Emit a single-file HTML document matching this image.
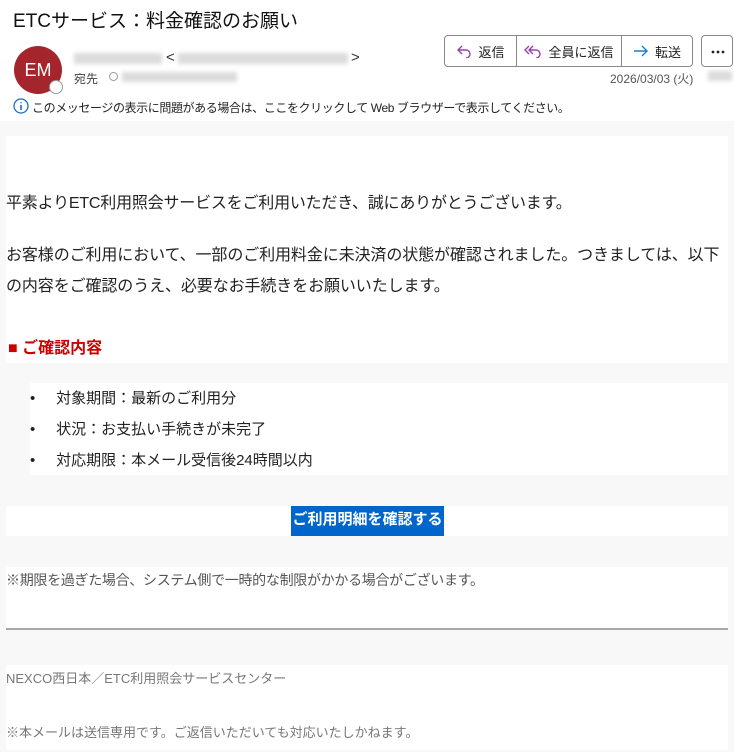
<!DOCTYPE html>
<html><head><meta charset="utf-8"><style>
*{margin:0;padding:0;box-sizing:border-box}
body{width:734px;height:752px;overflow:hidden;background:#fff;font-family:"Liberation Sans","Noto Sans CJK JP",sans-serif;position:relative;color:#222}
.a{position:absolute;white-space:nowrap}
.w{position:absolute;background:#fff}
.blur{position:absolute;background:#ccc;filter:blur(2px);opacity:.7}
.btns{position:absolute;left:444px;top:35px;width:249px;height:32px;border:1px solid #8a8a8a;border-radius:4px;display:flex;font-size:13px;color:#222}
.btns div{display:flex;align-items:center;justify-content:center;gap:6px;border-right:1px solid #8a8a8a}
.btns div:last-child{border-right:none}
.b{font-size:16px;color:#222}
</style></head><body>
<div class="a" style="left:13px;top:6px;font-size:19px;color:#111">ETCサービス：料金確認のお願い</div>
<div style="position:absolute;left:14px;top:46px;width:48px;height:48px;border-radius:50%;background:#a4262c;color:#fff;font-size:18px;text-align:center;line-height:48px">EM</div>
<div style="position:absolute;left:49px;top:80px;width:14px;height:14px;border-radius:50%;background:#fff;border:1px solid #999"></div>
<div class="blur" style="left:74px;top:53px;width:88px;height:11px"></div>
<div class="a" style="left:166px;top:49px;font-size:15px;color:#333">&lt;</div>
<div class="blur" style="left:178px;top:53px;width:170px;height:11px"></div>
<div class="a" style="left:351px;top:49px;font-size:15px;color:#333">&gt;</div>
<div class="a" style="left:74px;top:70px;font-size:12px;color:#444">宛先</div>
<div style="position:absolute;left:109px;top:72px;width:9px;height:9px;border-radius:50%;border:1px solid #999"></div>
<div class="blur" style="left:122px;top:72px;width:115px;height:10px"></div>
<div class="btns">
<div style="width:72px"><svg width="16" height="14" viewBox="0 0 16 14"><path d="M6 2 L2 6 L6 10 M2 6 H10 A4 4 0 0 1 10 14" fill="none" stroke="#9b3fb4" stroke-width="1.4"/></svg>返信</div>
<div style="width:105px"><svg width="18" height="14" viewBox="0 0 18 14"><path d="M5 2 L1 6 L5 10 M9 2 L5 6 L9 10 M5 6 H12 A4 4 0 0 1 12 14" fill="none" stroke="#9b3fb4" stroke-width="1.4"/></svg>全員に返信</div>
<div style="width:70px"><svg width="16" height="14" viewBox="0 0 16 14"><path d="M1 7 H14 M9 2 L14 7 L9 12" fill="none" stroke="#1e7bd0" stroke-width="1.4"/></svg>転送</div>
</div>
<div style="position:absolute;left:701px;top:35px;width:32px;height:32px;border:1px solid #8a8a8a;border-radius:4px"><svg style="position:absolute;left:8px;top:14px" width="16" height="4"><circle cx="3" cy="2" r="1.4" fill="#222"/><circle cx="8" cy="2" r="1.4" fill="#222"/><circle cx="13" cy="2" r="1.4" fill="#222"/></svg></div>
<div class="a" style="left:610px;top:70px;font-size:12px;color:#555">2026/03/03 (火)</div>
<div class="blur" style="left:708px;top:71px;width:24px;height:10px"></div>
<svg style="position:absolute;left:13px;top:98px" width="16" height="16" viewBox="0 0 16 16"><circle cx="8" cy="8" r="7" fill="none" stroke="#1e6fc0" stroke-width="1.3"/><path d="M8 7 V12 M8 4.2 V5.2" stroke="#1e6fc0" stroke-width="1.6"/></svg>
<div class="a" style="left:32px;top:99px;font-size:12px;color:#222;letter-spacing:-.4px">このメッセージの表示に問題がある場合は、ここをクリックして Web ブラウザーで表示してください。</div>

<div style="position:absolute;left:0;top:121px;width:734px;height:631px;background:#f8f8f8"></div>
<div class="w" style="left:6px;top:136px;width:722px;height:227px"></div>
<div class="w" style="left:30px;top:383px;width:698px;height:92px"></div>
<div class="w" style="left:6px;top:506px;width:722px;height:30px"></div>
<div class="w" style="left:6px;top:567px;width:722px;height:62px"></div>
<div style="position:absolute;left:6px;top:628px;width:722px;height:2px;background:#a8a8a8"></div>
<div class="w" style="left:6px;top:665px;width:722px;height:85px"></div>

<div class="a b" style="left:6px;top:189px;letter-spacing:-.2px">平素よりETC利用照会サービスをご利用いただき、誠にありがとうございます。</div>
<div class="a b" style="left:6px;top:241px;letter-spacing:-.1px">お客様のご利用において、一部のご利用料金に未決済の状態が確認されました。つきましては、以下</div>
<div class="a b" style="left:6px;top:272px;letter-spacing:-.1px">の内容をご確認のうえ、必要なお手続きをお願いいたします。</div>
<div class="a" style="left:8px;top:334px;font-size:16px;font-weight:bold;color:#cc0000">■ ご確認内容</div>
<div class="a" style="left:30px;top:383px;font-size:15px;line-height:31px;color:#222">
<div>•&nbsp;&nbsp;&nbsp;&nbsp;&nbsp;対象期間：最新のご利用分</div>
<div>•&nbsp;&nbsp;&nbsp;&nbsp;&nbsp;状況：お支払い手続きが未完了</div>
<div>•&nbsp;&nbsp;&nbsp;&nbsp;&nbsp;対応期限：本メール受信後24時間以内</div>
</div>
<div class="a" style="left:291px;top:506px;width:153px;height:30px;background:#0066cc;color:#fff;font-size:15px;font-weight:bold;text-align:center;line-height:28px">ご利用明細を確認する</div>
<div class="a" style="left:6px;top:570px;font-size:14px;color:#555;letter-spacing:-.3px">※期限を過ぎた場合、システム側で一時的な制限がかかる場合がございます。</div>
<div class="a" style="left:6px;top:668px;font-size:13px;color:#777">NEXCO西日本／ETC利用照会サービスセンター</div>
<div class="a" style="left:6px;top:722px;font-size:13px;color:#777">※本メールは送信専用です。ご返信いただいても対応いたしかねます。</div>
</body></html>
